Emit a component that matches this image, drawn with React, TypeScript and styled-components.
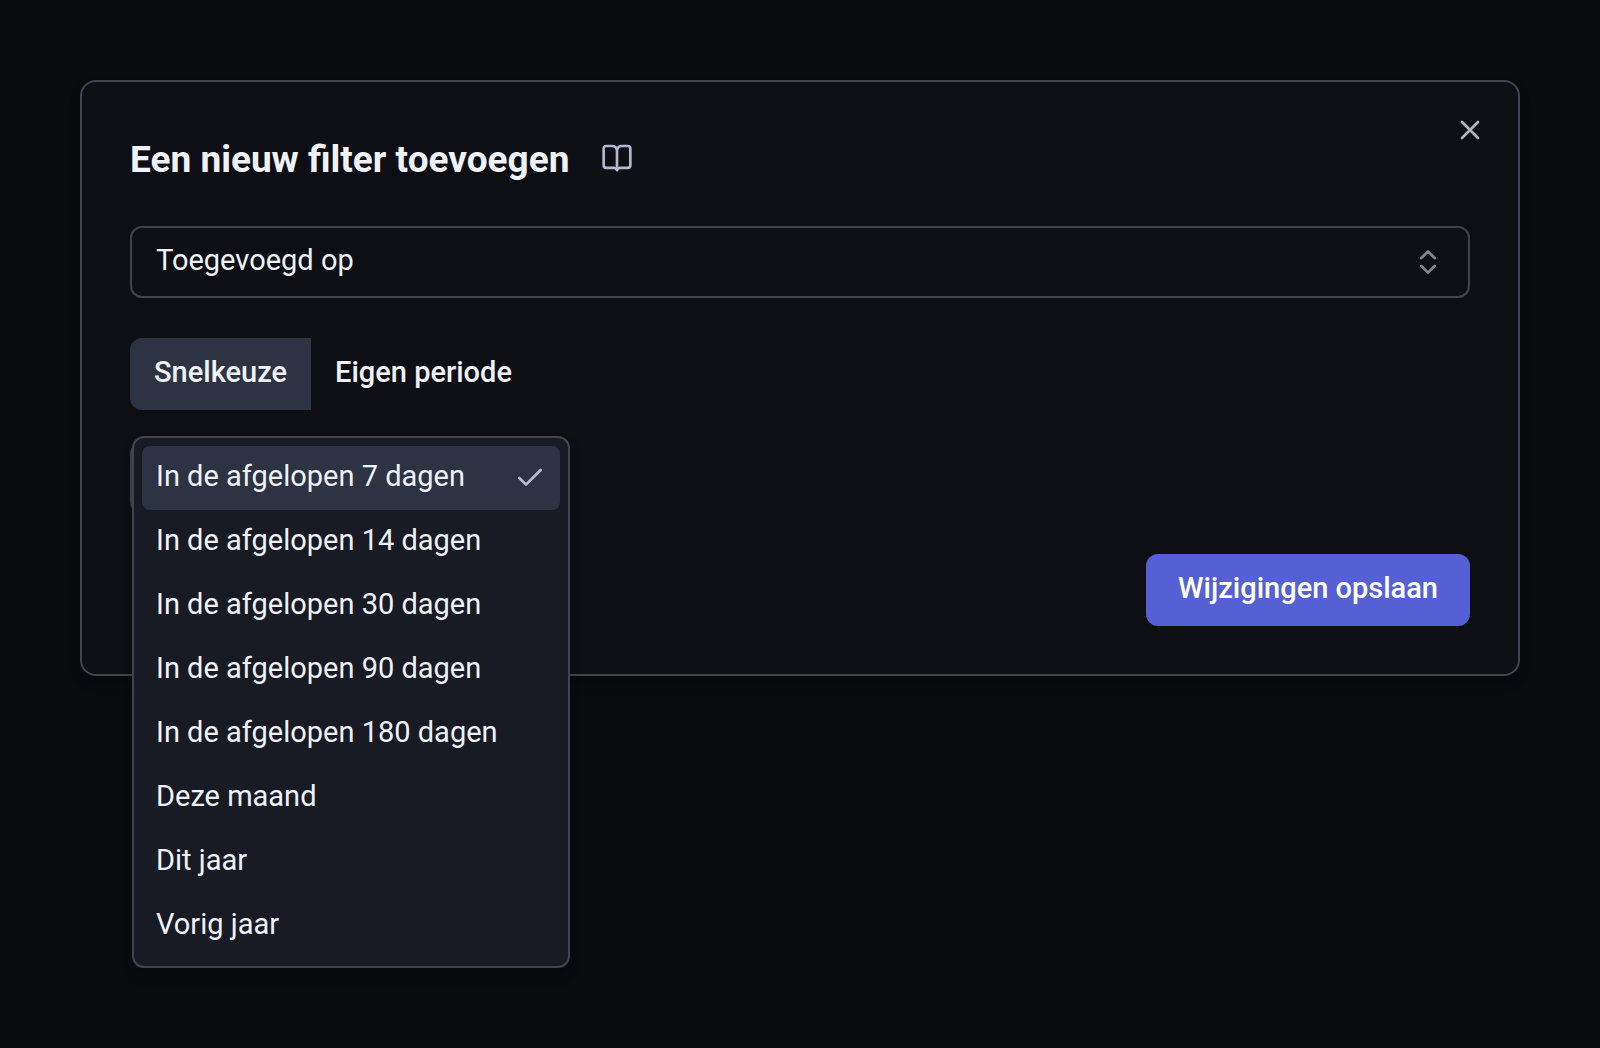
import React, { useState } from 'react';
import styled, { createGlobalStyle } from 'styled-components';
import { Check, ChevronsUpDown, X } from 'lucide-react';

const color = {
  page: '#0a0b0f',
  card: '#0d0f14',
  popover: '#181b24',
  border: '#42434e',
  accent: '#2d3342',
  text: '#f0f2fb',
  primary: '#5460d3',
};

const GlobalStyle = createGlobalStyle`
  *, *::before, *::after { box-sizing: border-box; }
  body {
    margin: 0;
    background: ${color.page};
    color: ${color.text};
    font-family: Roboto, 'Liberation Sans', sans-serif;
    font-size: 29px;
    line-height: 40px;
  }
  button, select { font: inherit; color: inherit; }
`;

const Page = styled.main`
  min-height: 100vh;
  padding: 80px;
`;

const Card = styled.section`
  padding: 32px;
  background: ${color.card};
  border: 2px solid ${color.border};
  border-radius: 16px;
  box-shadow: 0 8px 12px rgba(0, 0, 0, 0.2);
`;

const Header = styled.header`
  display: flex;
  align-items: flex-start;
  justify-content: space-between;
`;

const TitleGroup = styled.div`
  display: flex;
  align-items: flex-start;
  gap: 32px;
  padding: 24px 0 0 16px;
`;

const Title = styled.h1`
  margin: 0;
  font-size: 37px;
  line-height: 44px;
  font-weight: 700;
`;

const IconLink = styled.a`
  display: flex;
  padding-top: 4px;
  color: #b4b7d0;
`;

const CloseButton = styled.button`
  display: flex;
  padding: 0;
  border: 0;
  background: none;
  color: #b4b5b9;
  cursor: pointer;
`;

const Body = styled.form`
  display: flex;
  flex-direction: column;
  padding: 44px 16px 16px;
`;

const SelectBox = styled.div`
  display: grid;
  align-items: center;
  margin-bottom: 40px;

  > * { grid-area: 1 / 1; }
  > svg {
    justify-self: end;
    margin-right: 26px;
    color: #86878b;
    pointer-events: none;
  }
`;

const Select = styled.select`
  width: 100%;
  height: 72px;
  padding: 0 24px 4px;
  border: 2px solid ${color.border};
  border-radius: 12px;
  background: transparent;
  appearance: none;

  option { background: ${color.popover}; }
`;

const Tabs = styled.div`
  display: flex;
  margin-bottom: 32px;
`;

const Tab = styled.button<{ $active: boolean }>`
  height: 72px;
  padding: 0 24px 4px;
  border: 0;
  background: ${(p) => (p.$active ? color.accent : 'transparent')};
  font-weight: 500;
  cursor: pointer;

  &:first-child { border-radius: 12px 0 0 12px; }
  &:last-child { border-radius: 0 12px 12px 0; }
`;

const PeriodField = styled.div`
  position: relative;
  align-self: flex-start;
  width: 440px;
  max-width: 100%;
  margin-bottom: 40px;
`;

const PeriodTrigger = styled.button`
  display: block;
  width: 100%;
  height: 72px;
  border: 2px solid ${color.border};
  border-radius: 12px;
  background: transparent;
`;

const Menu = styled.ul`
  position: absolute;
  top: -6px;
  left: 2px;
  right: 0;
  margin: 0;
  padding: 8px;
  list-style: none;
  background: ${color.popover};
  border: 2px solid ${color.border};
  border-radius: 12px;
  box-shadow: 0 8px 12px rgba(0, 0, 0, 0.2);
`;

const MenuItem = styled.button<{ $selected: boolean }>`
  display: flex;
  align-items: center;
  justify-content: space-between;
  width: 100%;
  height: 64px;
  padding: 0 14px;
  border: 0;
  border-radius: 8px;
  background: ${(p) => (p.$selected ? color.accent : 'transparent')};
  text-align: left;
  cursor: pointer;

  > svg { color: #b9bdcc; }
`;

const MenuLabel = styled.span`
  padding-bottom: 4px;
`;

const SaveButton = styled.button`
  align-self: flex-end;
  min-width: 322px;
  height: 72px;
  padding: 0 32px 4px;
  border: 0;
  border-radius: 12px;
  background: ${color.primary};
  color: #fff;
  font-weight: 500;
  cursor: pointer;
`;

const periods = [
  'In de afgelopen 7 dagen',
  'In de afgelopen 14 dagen',
  'In de afgelopen 30 dagen',
  'In de afgelopen 90 dagen',
  'In de afgelopen 180 dagen',
  'Deze maand',
  'Dit jaar',
  'Vorig jaar',
];

const modes = ['Snelkeuze', 'Eigen periode'];

function BookIcon() {
  return (
    <svg
      width="32"
      height="32"
      viewBox="0 0 24 24"
      fill="none"
      stroke="currentColor"
      strokeWidth="2"
      strokeLinecap="round"
      strokeLinejoin="round"
      aria-hidden="true"
    >
      <path d="M12 5.4V21" />
      <path d="M12 5.4C11.3 3.8 10.1 3 8.5 3H4a2 2 0 0 0-2 2v12.4a2 2 0 0 0 2 2h5.5c1.2 0 2 .5 2.5 1.6.5-1.1 1.3-1.6 2.5-1.6H20a2 2 0 0 0 2-2V5a2 2 0 0 0-2-2h-4.5c-1.6 0-2.8.8-3.5 2.4Z" />
    </svg>
  );
}

export default function App() {
  const [mode, setMode] = useState(modes[0]);
  const [period, setPeriod] = useState(periods[0]);

  return (
    <>
      <GlobalStyle />
      <Page>
        <Card role="dialog" aria-labelledby="filter-title">
          <Header>
            <TitleGroup>
              <Title id="filter-title">Een nieuw filter toevoegen</Title>
              <IconLink href="#docs" aria-label="Documentatie">
                <BookIcon />
              </IconLink>
            </TitleGroup>
            <CloseButton type="button" aria-label="Sluiten">
              <X size={32} />
            </CloseButton>
          </Header>
          <Body onSubmit={(e) => e.preventDefault()}>
            <SelectBox>
              <Select aria-label="Filter">
                <option>Toegevoegd op</option>
              </Select>
              <ChevronsUpDown size={32} />
            </SelectBox>
            <Tabs role="tablist">
              {modes.map((m) => (
                <Tab
                  key={m}
                  type="button"
                  role="tab"
                  aria-selected={m === mode}
                  $active={m === mode}
                  onClick={() => setMode(m)}
                >
                  {m}
                </Tab>
              ))}
            </Tabs>
            <PeriodField>
              <PeriodTrigger type="button" aria-label="Periode" aria-haspopup="listbox" aria-expanded />
              <Menu role="listbox" aria-label="Periode">
                {periods.map((p) => (
                  <li key={p} role="none">
                    <MenuItem
                      type="button"
                      role="option"
                      aria-selected={p === period}
                      $selected={p === period}
                      onClick={() => setPeriod(p)}
                    >
                      <MenuLabel>{p}</MenuLabel>
                      {p === period && <Check size={32} />}
                    </MenuItem>
                  </li>
                ))}
              </Menu>
            </PeriodField>
            <SaveButton type="submit">Wijzigingen opslaan</SaveButton>
          </Body>
        </Card>
      </Page>
    </>
  );
}
